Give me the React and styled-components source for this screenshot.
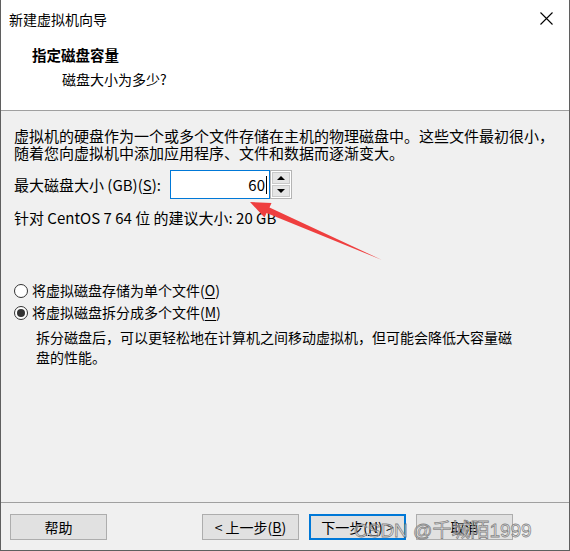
import React, { useState } from 'react';
import styled, { createGlobalStyle } from 'styled-components';

const GlobalStyle = createGlobalStyle`
  html, body {
    margin: 0;
    padding: 0;
    background: #ffffff;
  }
  * {
    box-sizing: border-box;
  }
`;

const FONT = `"Noto Sans CJK SC", "Noto Sans", sans-serif`;

const Window = styled.div`
  position: relative;
  width: 570px;
  height: 551px;
  display: flex;
  flex-direction: column;
  background: #f0f0f0;
  border-left: 1px solid #5f5f5f;
  border-right: 1px solid #5f5f5f;
  border-bottom: 1px solid #5f5f5f;
  font-family: ${FONT};
  color: #000;
  overflow: hidden;
`;

const TitleBar = styled.div`
  height: 36px;
  display: flex;
  align-items: center;
  justify-content: space-between;
  padding: 2px 0 0 8px;
  background: #fff;
  font-size: 14px;
`;

const CloseButton = styled.div`
  width: 46px;
  height: 36px;
  display: flex;
  align-items: center;
  justify-content: center;
  margin-top: -2px;
`;

const Header = styled.div`
  height: 75px;
  background: #fff;
  border-bottom: 1px solid #a0a0a0;
  padding: 9px 0 0 31px;
`;

const HeaderTitle = styled.div`
  font-size: 14.5px;
  font-weight: bold;
  line-height: 20px;
`;

const HeaderSub = styled.div`
  font-size: 14px;
  line-height: 20px;
  padding-left: 30px;
  margin-top: 4px;
`;

const Body = styled.div`
  flex: 1;
  padding: 16px 14px 0 13px;
  font-size: 14px;
`;

const Para = styled.div`
  font-size: 15px;
  line-height: 17px;
`;

const SizeRow = styled.div`
  display: flex;
  align-items: center;
  margin-top: 9px;
  height: 29px;
`;

const Label = styled.span`
  font-size: 15px;
  width: 156px;
`;

const Key = styled.span`
  text-decoration: underline;
  text-underline-offset: 2px;
`;

const NumberBox = styled.div`
  width: 100px;
  height: 29px;
  border: 1px solid #0078d7;
  background: #fff;
  display: flex;
  align-items: center;
  justify-content: flex-end;
  padding-right: 2px;
  font-size: 15px;
`;

const Caret = styled.span`
  display: inline-block;
  width: 1px;
  height: 18px;
  background: #000;
  margin-left: 1px;
`;

const Spinner = styled.div`
  width: 22px;
  height: 29px;
  border: 1px solid #b4b4b4;
  background: #fff;
  display: flex;
  flex-direction: column;
  gap: 1px;
  padding: 1px;
`;

const SpinButton = styled.div`
  flex: 1;
  background: #e5e5e5;
  border: 1px solid #c9c9c9;
  display: flex;
  align-items: center;
  justify-content: center;
`;

const Triangle = styled.span`
  width: 0;
  height: 0;
  border-left: 4px solid transparent;
  border-right: 4px solid transparent;
  ${({ $up }) => ($up ? 'border-bottom: 4px solid #000;' : 'border-top: 4px solid #000;')}
`;

const Recommend = styled.div`
  font-size: 15px;
  line-height: 17px;
  margin-top: 10px;
`;

const RadioGroup = styled.div`
  margin-top: 56px;
  display: flex;
  flex-direction: column;
  gap: 5px;
`;

const RadioRow = styled.label`
  display: flex;
  align-items: center;
  gap: 4px;
  font-size: 14px;
  line-height: 17px;
`;

const RadioCircle = styled.span`
  width: 14px;
  height: 14px;
  border-radius: 50%;
  border: 1px solid #333;
  background: #fff;
  display: flex;
  align-items: center;
  justify-content: center;
  &::after {
    content: '';
    width: 8px;
    height: 8px;
    border-radius: 50%;
    background: ${({ $checked }) => ($checked ? '#333' : 'transparent')};
  }
`;

const Description = styled.div`
  margin: 6px 0 0 22px;
  font-size: 14px;
  line-height: 20px;
`;

const Footer = styled.div`
  height: 48px;
  border-top: 1px solid #a0a0a0;
  display: flex;
  align-items: flex-start;
  padding: 11px 0 0 9px;
`;

const Button = styled.div`
  width: 97px;
  height: 26px;
  background: #e1e1e1;
  border: ${({ $default }) => ($default ? '2px solid #0078d7' : '1px solid #adadad')};
  display: flex;
  align-items: center;
  justify-content: center;
  font-size: 14px;
  margin-left: ${({ $gap }) => $gap || 0}px;
`;

const Arrow = styled.svg`
  position: absolute;
  left: -1px;
  top: 0;
  pointer-events: none;
`;

const Watermark = styled.div`
  position: absolute;
  left: 353px;
  top: 515px;
  font-family: "Liberation Sans", "Noto Sans CJK SC", sans-serif;
  font-size: 19px;
  color: rgba(255, 255, 255, 0.5);
  -webkit-text-stroke: 0.8px rgba(105, 105, 105, 0.8);
  pointer-events: none;
  white-space: nowrap;
`;

export default function App() {
  const [split, setSplit] = useState(true);

  return (
    <>
      <GlobalStyle />
      <Window>
        <TitleBar>
          <span>新建虚拟机向导</span>
          <CloseButton>
            <svg width="13" height="13" viewBox="0 0 13 13">
              <path d="M0.5 0.5L12.5 12.5M12.5 0.5L0.5 12.5" stroke="#000" strokeWidth="1.1" />
            </svg>
          </CloseButton>
        </TitleBar>
        <Header>
          <HeaderTitle>指定磁盘容量</HeaderTitle>
          <HeaderSub>磁盘大小为多少?</HeaderSub>
        </Header>
        <Body>
          <Para>
            虚拟机的硬盘作为一个或多个文件存储在主机的物理磁盘中。这些文件最初很小，
            <br />
            随着您向虚拟机中添加应用程序、文件和数据而逐渐变大。
          </Para>
          <SizeRow>
            <Label>
              最大磁盘大小 (GB)(<Key>S</Key>):
            </Label>
            <NumberBox>
              60<Caret />
            </NumberBox>
            <Spinner>
              <SpinButton>
                <Triangle $up />
              </SpinButton>
              <SpinButton>
                <Triangle />
              </SpinButton>
            </Spinner>
          </SizeRow>
          <Recommend>针对 CentOS 7 64 位 的建议大小: 20 GB</Recommend>
          <RadioGroup>
            <RadioRow onClick={() => setSplit(false)}>
              <RadioCircle $checked={!split} />
              <span>
                将虚拟磁盘存储为单个文件(<Key>O</Key>)
              </span>
            </RadioRow>
            <RadioRow onClick={() => setSplit(true)}>
              <RadioCircle $checked={split} />
              <span>
                将虚拟磁盘拆分成多个文件(<Key>M</Key>)
              </span>
            </RadioRow>
          </RadioGroup>
          <Description>
            拆分磁盘后，可以更轻松地在计算机之间移动虚拟机，但可能会降低大容量磁
            <br />
            盘的性能。
          </Description>
        </Body>
        <Footer>
          <Button>帮助</Button>
          <Button $gap={95}>
            &lt; 上一步(<Key>B</Key>)
          </Button>
          <Button $default $gap={10}>
            下一步(<Key>N</Key>) &gt;
          </Button>
          <Button $gap={10}>取消</Button>
        </Footer>
        <Arrow width="570" height="551" viewBox="0 0 570 551">
          <polygon
            points="250,202 271.5,203 269.5,207.5 382,260 266.5,213 264.5,217.5"
            fill="#ef3f3f"
          />
        </Arrow>
        <Watermark>CSDN @千城陌1999</Watermark>
      </Window>
    </>
  );
}
